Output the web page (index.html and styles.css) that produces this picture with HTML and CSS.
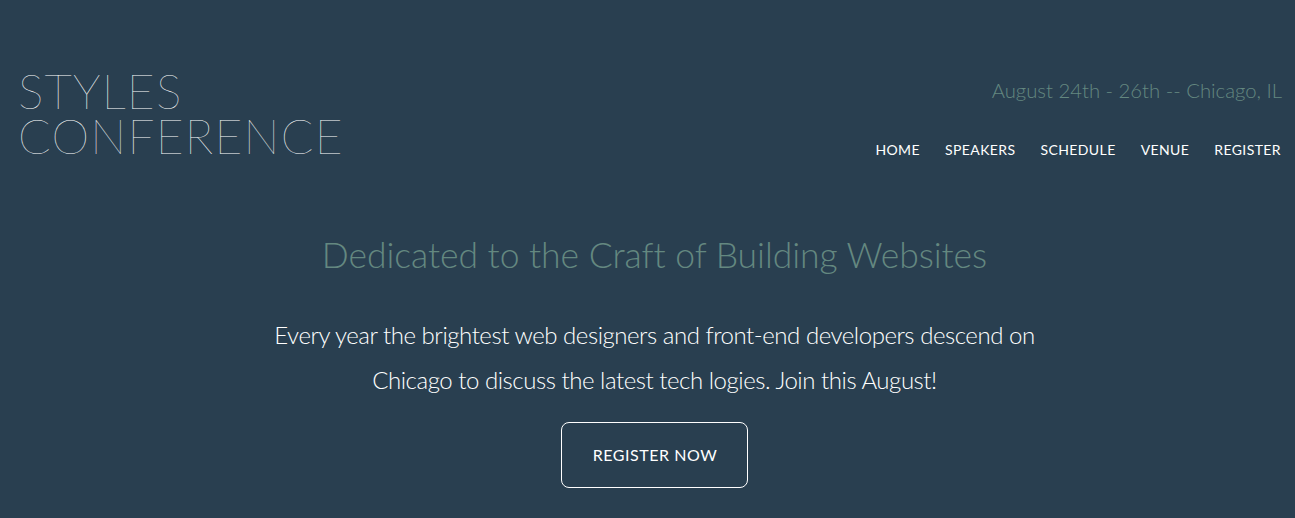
FILE: index.html
```html
<!DOCTYPE html>
<html lang="en">
<head>
<meta charset="utf-8">
<title>Styles Conference</title>
<link rel="stylesheet" href="styles.css">
</head>
<body>
<header class="primary-header">
  <h1 class="logo">Styles<br>Conference</h1>
  <div class="header-right">
    <h3 class="tagline">August 24th - 26th -- Chicago, IL</h3>
    <nav class="primary-nav">
      <a href="#">Home</a>
      <a href="#">Speakers</a>
      <a href="#">Schedule</a>
      <a href="#">Venue</a>
      <a href="#">Register</a>
    </nav>
  </div>
</header>
<section class="hero">
  <h2 class="hero-title">Dedicated to the Craft of Building Websites</h2>
  <p class="hero-text">Every year the brightest web designers and front-end developers descend on Chicago to discuss the latest tech logies. Join this August!</p>
  <a class="btn-alt" href="#">Register Now</a>
</section>
</body>
</html>
```

FILE: styles.css
```css
* { box-sizing: border-box; }
html, body { margin: 0; padding: 0; }
body {
  background: #293f50;
  color: #fff;
  font-family: "Lato", "Liberation Sans", sans-serif;
  font-weight: 300;
  font-size: 16px;
  line-height: 22px;
}
a { text-decoration: none; color: #fff; }

.primary-header {
  display: flex;
  justify-content: space-between;
  align-items: flex-start;
  padding: 69px 13px 0 18px;
}
.logo {
  margin: 0;
  font-size: 48px;
  font-weight: 100;
  line-height: 44.5px;
  letter-spacing: 1.2px;
  text-transform: uppercase;
  color: #fff;
}
.header-right {
  display: flex;
  flex-direction: column;
  align-items: flex-end;
}
.tagline {
  margin: 10px 0 0 0;
  font-size: 20.3px;
  font-weight: 300;
  line-height: 22px;
  color: #648880;
}
.primary-nav {
  display: flex;
  gap: 25px;
  margin-top: 38px;
  padding-right: 1px;
  font-size: 14px;
  font-weight: 400;
  letter-spacing: 0.4px;
  line-height: 22px;
  text-transform: uppercase;
}
.hero {
  display: flex;
  flex-direction: column;
  align-items: center;
  text-align: center;
  padding: 72px 0 0 14px;
}
.hero-title {
  margin: 0;
  font-size: 35.5px;
  font-weight: 300;
  letter-spacing: -0.05px;
  line-height: 44px;
  color: #648880;
}
.hero-text {
  margin: 35px 0 0 0;
  max-width: 800px;
  font-size: 24px;
  font-weight: 300;
  letter-spacing: -0.46px;
  line-height: 45px;
  color: #fff;
}
.btn-alt {
  margin-top: 20px;
  border: 1px solid #fff;
  border-radius: 8px;
  padding: 21px 30px 21px 31px;
  font-size: 16px;
  font-weight: 400;
  letter-spacing: 0.55px;
  line-height: 22px;
  text-transform: uppercase;
}
```
